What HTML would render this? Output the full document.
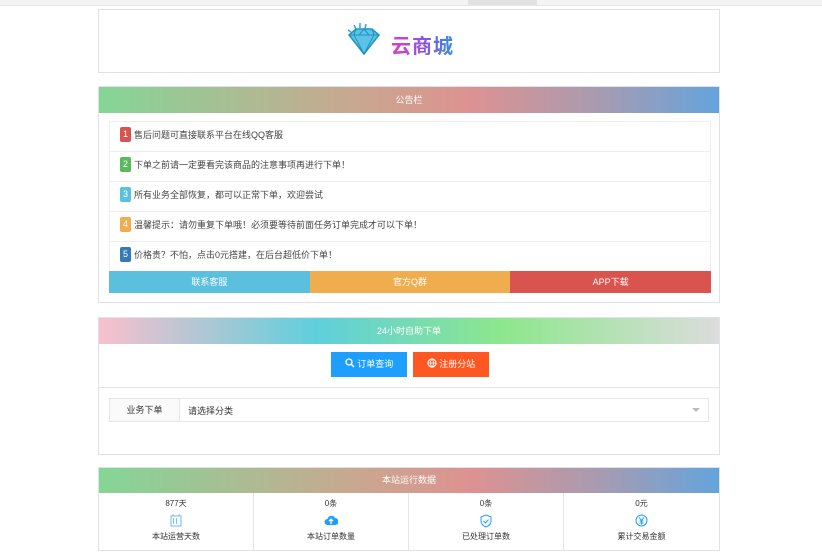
<!DOCTYPE html>
<html><head><meta charset="utf-8"><style>
*{box-sizing:border-box;margin:0;padding:0}
body{width:822px;height:555px;background:#fff;font-family:"Liberation Sans","Noto Sans CJK SC",sans-serif;font-size:9px;color:#333;position:relative;overflow:hidden}
.top{position:absolute;left:0;top:0;width:822px;height:6px;background:#f4f4f4;border-bottom:1px solid #e6e6e6}
.top i{position:absolute;left:468px;top:0;width:69px;height:5px;background:#e2e2e2}
.panel{position:absolute;left:98px;width:622px;border:1px solid #dde3e8;background:#fff}
.hd{height:26px;line-height:26px;text-align:center;color:#fff;font-size:9px}
.g1{background:linear-gradient(90deg,#84d696,#c7a990 40%,#dd9291 60%,#aa9bb0 80%,#64a4dc)}
.g2{background:linear-gradient(90deg,#f9c0cd,#5fcfdc 35%,#8de78d 65%,#dcdcdc)}
.item{position:absolute;left:10px;width:602px;height:30px;border:1px solid #eee;border-bottom:none;line-height:26px;padding-left:10px;font-size:9px;color:#444}
.b{display:inline-block;width:11px;height:15px;line-height:15px;color:#fff;text-align:center;border-radius:2px;margin-right:3px;font-size:9px;vertical-align:middle;position:relative;top:-1px}
.btns{position:absolute;left:10px;top:184px;width:602px;height:22px;display:flex;color:#fff;line-height:22px;text-align:center}
.btns div{flex:1}
.stat{position:absolute;top:25px;height:57px;width:155px;text-align:center;border-right:1px solid #e5e5e5;font-size:8px;color:#333}
.ic{height:14px;margin:5px 0 3px}
</style></head><body>
<div class="top"><i></i></div>
<div class="panel" style="top:9px;height:64px">
<svg style="position:absolute;left:245px;top:12px" width="38" height="36" viewBox="0 0 38 36"><g stroke="#2aa7d6" stroke-width="1.5" fill="none"><path d="M10 3l2 4M16 1v5M22 2l-1 5M4 8l3 2"/></g><path d="M5 13l7-6h16l7 6-15 19z" fill="#5cc3e6" stroke="#1f93c4" stroke-width="1.5"/><path d="M5 13h30M12 7l-2 6 10 19M28 7l2 6-10 19M20 7l-5 6M20 7l5 6" stroke="#1f93c4" stroke-width="1" fill="none"/></svg>
<div style="position:absolute;left:292px;top:20px;font-size:20px;font-weight:bold;letter-spacing:1px;background:linear-gradient(90deg,#e040c0,#9050e0,#3090e0);-webkit-background-clip:text;color:transparent">云商城</div>
</div>
<div class="panel" style="top:86px;height:217px">
<div class="hd g1">公告栏</div>
<div class="item" style="top:34px"><span class="b" style="background:#d9534f">1</span>售后问题可直接联系平台在线QQ客服</div>
<div class="item" style="top:64px"><span class="b" style="background:#5cb85c">2</span>下单之前请一定要看完该商品的注意事项再进行下单！</div>
<div class="item" style="top:94px"><span class="b" style="background:#5bc0de">3</span>所有业务全部恢复，都可以正常下单，欢迎尝试</div>
<div class="item" style="top:124px"><span class="b" style="background:#f0ad4e">4</span>温馨提示：请勿重复下单哦！必须要等待前面任务订单完成才可以下单！</div>
<div class="item" style="top:154px"><span class="b" style="background:#337ab7">5</span>价格贵？不怕，点击0元搭建，在后台超低价下单！</div>
<div class="btns"><div style="background:#5bc0de">联系客服</div><div style="background:#f0ad4e">官方Q群</div><div style="background:#d9534f">APP下载</div></div>
</div>
<div class="panel" style="top:317px;height:138px">
<div class="hd g2">24小时自助下单</div>
<div style="position:absolute;left:232px;top:34px;width:76px;height:25px;background:#1e9fff;color:#fff;line-height:25px;text-align:center"><svg width="10" height="10" viewBox="0 0 10 10" style="vertical-align:-1px"><circle cx="4" cy="4" r="3" stroke="#fff" stroke-width="1.3" fill="none"/><path d="M6.3 6.3L9 9" stroke="#fff" stroke-width="1.5"/></svg> 订单查询</div>
<div style="position:absolute;left:314px;top:34px;width:76px;height:25px;background:#ff5722;color:#fff;line-height:25px;text-align:center"><svg width="10" height="10" viewBox="0 0 10 10" style="vertical-align:-1px"><circle cx="5" cy="5" r="4" stroke="#fff" stroke-width="1.2" fill="none"/><path d="M1 5h8M5 1c-2 2-2 6 0 8M5 1c2 2 2 6 0 8" stroke="#fff" stroke-width="0.8" fill="none"/></svg> 注册分站</div>
<div style="position:absolute;left:0;top:69px;width:620px;border-top:1px solid #e6e6e6"></div>
<div style="position:absolute;left:10px;top:80px;width:600px;height:24px;border:1px solid #e6e6e6;line-height:22px">
<div style="position:absolute;left:0;top:0;width:70px;height:22px;background:#fafafa;border-right:1px solid #e6e6e6;text-align:center">业务下单</div>
<div style="position:absolute;left:78px;top:1px">请选择分类</div>
<div style="position:absolute;right:8px;top:9px;border:4px solid transparent;border-top:4px solid #bbb"></div>
</div>
</div>
<div class="panel" style="top:467px;height:84px">
<div class="hd g1" style="height:25px;line-height:25px">本站运行数据</div>
<div class="stat" style="left:0"><div style="margin-top:5px">877天</div><div class="ic"><svg width="12" height="13" viewBox="0 0 12 13"><rect x="1" y="2" width="10" height="10" fill="none" stroke="#6ab8f7"/><path d="M3 5h1M6 5h1M9 5h0M3 7h1M6 7h1M9 7h0M3 9h1M6 9h1M9 9h0" stroke="#1e9fff" stroke-width="1.2"/><path d="M3 0v2M9 0v2" stroke="#6ab8f7"/></svg></div><div>本站运营天数</div></div>
<div class="stat" style="left:155px"><div style="margin-top:5px">0条</div><div class="ic"><svg width="14" height="12" viewBox="0 0 14 12"><path d="M3.5 11a3 3 0 010-6 4 4 0 017.5-1 3.3 3.3 0 010 7z" fill="#1e9fff"/><path d="M7 10V5M5 7l2-2 2 2" stroke="#fff" stroke-width="1.3" fill="none"/></svg></div><div>本站订单数量</div></div>
<div class="stat" style="left:310px"><div style="margin-top:5px">0条</div><div class="ic"><svg width="12" height="14" viewBox="0 0 12 14"><path d="M6 1l5 2v4c0 3-2.5 5-5 6-2.5-1-5-3-5-6V3z" fill="none" stroke="#1e9fff"/><path d="M3.5 7l2 2 3-3.5" stroke="#1e9fff" fill="none"/></svg></div><div>已处理订单数</div></div>
<div class="stat" style="left:465px;border:none"><div style="margin-top:5px">0元</div><div class="ic"><svg width="13" height="13" viewBox="0 0 13 13"><circle cx="6.5" cy="6.5" r="5.5" fill="none" stroke="#1e9fff"/><path d="M4 3.5l2.5 3 2.5-3M6.5 6.5v4M4.5 7h4M4.5 9h4" stroke="#1e9fff" fill="none"/></svg></div><div>累计交易金额</div></div>
</div>
</body></html>
